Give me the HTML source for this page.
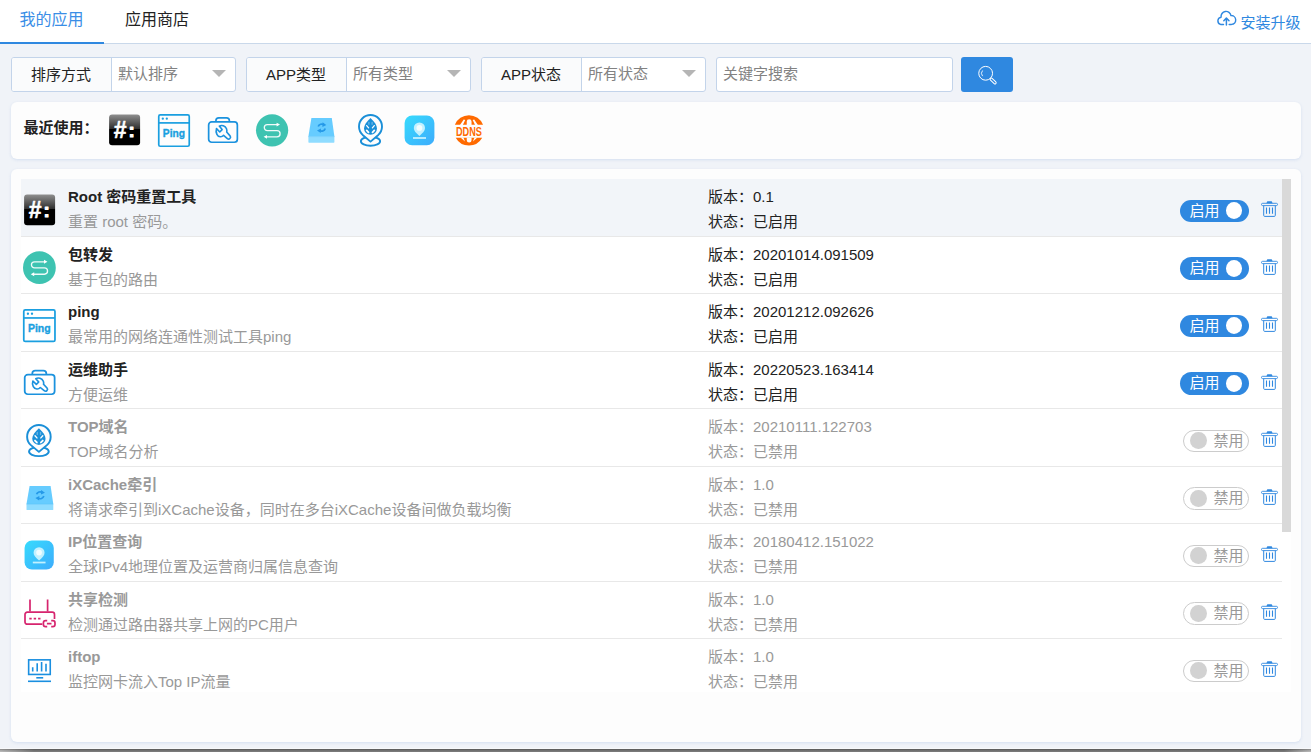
<!DOCTYPE html>
<html lang="zh-CN">
<head>
<meta charset="utf-8">
<title>我的应用</title>
<style>
*{box-sizing:border-box;margin:0;padding:0}
html,body{width:1311px;height:752px;overflow:hidden}
body{background:#f0f3f8;font-family:"Liberation Sans","Noto Sans CJK SC",sans-serif;font-size:15px;color:#222;position:relative}
svg{display:block;overflow:visible}
.tabs{position:absolute;left:0;top:0;width:1311px;height:44px;background:#fff;border-bottom:1px solid #c9d8ea}
.tab{position:absolute;top:0;height:44px;line-height:40px;font-size:16px;text-align:center;color:#222}
.tab.on{left:-1px;width:105px;color:#3a8ee6}
.tab.on:after{content:"";position:absolute;left:1px;bottom:0;width:104px;height:2.4px;background:#2f88e0}
.tab.t2{left:125px;width:64px}
.upg{position:absolute;right:10.6px;top:0;height:44px;line-height:45px;font-size:15px;color:#2f88e0}
.upg svg{position:absolute;left:-25px;top:11px}
.fg{position:absolute;top:57px;height:35px;border:1px solid #c3d4ea;border-radius:3px;background:#fff;overflow:hidden}
.fg .lb{position:absolute;left:0;top:0;width:100px;height:33px;line-height:34px;text-align:center;background:#fafbfc;border-right:1px solid #c3d4ea;font-size:15px;color:#222;text-indent:-1px}
.fg .sel{position:absolute;left:106px;top:0;height:33px;line-height:31px;font-size:15px;color:#828282}
.fg .arr{position:absolute;right:9px;top:12px;width:0;height:0;border-left:7.5px solid transparent;border-right:7.5px solid transparent;border-top:7.5px solid #b5b5b5}
.srch{position:absolute;left:716px;top:57px;width:237px;height:35px;border:1px solid #c3d4ea;border-radius:3px;background:#fff;line-height:31px;padding-left:6px;font-size:15px;color:#828282}
.sbtn{position:absolute;left:961px;top:57px;width:52px;height:35px;background:#2f88e0;border-radius:3px}
.recent{position:absolute;left:11px;top:102px;width:1290px;height:57px;background:#fdfdfd;border-radius:6px;box-shadow:0 1px 3px rgba(180,200,230,.45)}
.recent .t{position:absolute;left:12.4px;top:0;line-height:52.4px;font-size:15px;font-weight:bold;color:#222}
.ri{position:absolute;top:12px}
.card{position:absolute;left:11px;top:169px;width:1290px;height:573px;background:#fdfdfd;border-radius:6px;box-shadow:0 1px 3px rgba(180,200,230,.45)}
.list{position:absolute;left:10px;top:10px;width:1270px;height:513px;background:#fff;overflow:hidden}
.sb{position:absolute;right:0;top:0;width:9px;height:352.6px;background:#d9d9d9}
.row{position:relative;height:57.5px;width:1261px;border-bottom:1px solid #e8e8e8}
.row.hl{background:#f2f5f9}
.row .ic{position:absolute;left:3px;top:15.4px}
.row .nm{position:absolute;left:47px;top:7px;font-size:15px;font-weight:bold;line-height:22px;color:#222;white-space:nowrap}
.row .ds{position:absolute;left:47px;top:32px;font-size:15px;line-height:22px;color:#999;white-space:nowrap}
.row .v1{position:absolute;left:687px;top:7px;font-size:15px;line-height:22px;color:#222;white-space:nowrap}
.row .v2{position:absolute;left:687px;top:32px;font-size:15px;line-height:22px;color:#222;white-space:nowrap}
.row.off .nm,.row.off .v1,.row.off .v2{color:#999}
.tg{position:absolute;top:20.5px;height:22.5px;border-radius:12px;font-size:15px;line-height:21px}
.tg.on{left:1159px;width:69px;background:#2f88e0;color:#fff;padding-left:9.6px}
.tg.on i{position:absolute;right:6.6px;top:2.6px;width:16.6px;height:17.2px;border-radius:50%;background:#fff}
.tg.off{left:1162px;width:66px;background:#fff;border:1px solid #ccc;color:#999;padding-left:29.6px;line-height:19px}
.tg.off i{position:absolute;left:6.3px;top:1.6px;width:16.8px;height:17.2px;border-radius:50%;background:#d2d2d2}
.del{position:absolute;left:1240px;top:22px}
.btm{position:absolute;left:0;top:747.7px;width:1311px;height:4.3px;border-top:1px solid #f8f9fb;background:linear-gradient(rgba(0,0,0,.28),rgba(0,0,0,0) 70%),linear-gradient(to right,#b8b8b8 0,#7a7a7a 34px,#787878 1284px,#b8b8b8 100%)}
</style>
</head>
<body>
<div class="tabs">
  <div class="tab on">我的应用</div>
  <div class="tab t2">应用商店</div>
  <div class="upg"><svg width="20" height="15" viewBox="0 0 20 15"><g fill="none" stroke="#2f88e0" stroke-width="1.45" stroke-linecap="round" stroke-linejoin="round"><path d="M8.5 13.4H5.5A3.7 3.7 0 0 1 6.1 6.2A5 5 0 0 1 16 4.6A4.2 4.2 0 0 1 16.6 13.4H14.2"/><path d="M11.4 14.1V7.2M8.8 9.7L11.4 7.1L14 9.7" stroke-width="1.5"/></g></svg>安装升级</div>
</div>

<div class="fg" style="left:11px;width:225px"><div class="lb">排序方式</div><div class="sel">默认排序</div><div class="arr"></div></div>
<div class="fg" style="left:246px;width:225px"><div class="lb">APP类型</div><div class="sel">所有类型</div><div class="arr"></div></div>
<div class="fg" style="left:481px;width:225px"><div class="lb">APP状态</div><div class="sel">所有状态</div><div class="arr"></div></div>
<div class="srch">关键字搜索</div>
<div class="sbtn"><svg width="52" height="35" viewBox="0 0 52 35"><g fill="none" stroke="#fff" stroke-width="1"><circle cx="24.65" cy="16.3" r="6.9"/><path d="M21.6 13.5a4.2 4.2 0 0 0 0 5.6" stroke-opacity=".85"/><path d="M30.3 22.2L34 25.8" stroke-width="3.3" stroke-linecap="round"/><path d="M30.3 22.2L34 25.8" stroke="#2f88e0" stroke-width="1.3" stroke-linecap="round"/></g></svg></div>

<div class="recent">
  <div class="t">最近使用：</div>
  <svg class="ri" style="left:98px" width="32" height="33" viewBox="0 0 32 33"><linearGradient id="rg1" x1="0" y1="0" x2="0" y2="1"><stop offset="0" stop-color="#909090"/><stop offset=".46" stop-color="#303030"/><stop offset=".47" stop-color="#000"/><stop offset="1" stop-color="#000"/></linearGradient><rect x="0.1" y="0.4" width="31" height="30.8" rx="3" fill="url(#rg1)"/><text font-family="Liberation Sans,sans-serif" font-weight="bold" fill="#fff" stroke="#fff" stroke-linejoin="round"><tspan x="4.7" y="23.7" font-size="23" stroke-width=".5">#</tspan><tspan x="19.6" y="22.9" font-size="18.8" stroke-width="1.1">:</tspan></text></svg><svg class="ri" style="left:147px" width="32" height="33" viewBox="0 0 32 33"><g fill="none" stroke="#1a9fe0" stroke-width="1.7"><rect x="0.75" y="0.95" width="30.5" height="31.3" rx="1.5"/><path d="M0.75 8.9H31.25"/></g><circle cx="4.8" cy="4.7" r="1.15" fill="#1a9fe0"/><circle cx="8.8" cy="4.7" r="1.15" fill="#1a9fe0"/><text x="4.8" y="22.8" font-family="Liberation Sans,sans-serif" font-weight="bold" font-size="10.8" fill="#1a9fe0" stroke="#1a9fe0" stroke-width=".35" textLength="22.2" lengthAdjust="spacingAndGlyphs">Ping</text></svg><svg class="ri" style="left:196px" width="32" height="33" viewBox="0 0 32 33"><g fill="none" stroke="#1b92de" stroke-width="1.7" stroke-linejoin="round"><rect x="1.65" y="7.95" width="28.7" height="20.3" rx="3"/><path d="M8.95 7.8V6.6a2.8 2.8 0 0 1 2.8-2.8h7.8a2.8 2.8 0 0 1 2.8 2.8V7.8"/><path d="M12.3 11.2C14.6 9.8 18.3 10.7 19.5 13.8C19.9 14.9 20 16.1 19.7 17.1L23.05 20.97A1.9 1.9 0 0 1 20.35 23.63L16.6 20.4C15.6 21.6 14.4 22 13.3 21.9C11.8 21.8 10.5 20.8 9.9 19.5C9.3 18.3 8.8 16 9.5 13.7L12.8 17.1L15.1 14.7Z" stroke-width="1.6" transform="translate(0 0.9)"/></g></svg><svg class="ri" style="left:245px" width="33" height="33" viewBox="0 0 33 33"><circle cx="16.1" cy="16.35" r="16.1" fill="#3ec3b1"/><path d="M21.5 10.6H11.3a3 3 0 0 0 0 6H21a3.1 3.1 0 0 1 0 6.2H10" fill="none" stroke="#fff" stroke-opacity=".92" stroke-width="1.3"/><path d="M20.6 8.7L24 10.6 20.6 12.5ZM11 20.9L7.6 22.8 11 24.7Z" fill="#fff"/></svg><svg class="ri" style="left:294px" width="32" height="33" viewBox="0 0 32 33"><path d="M6.4 4H26.8L29.4 22.6H3.4Z" fill="#66ccff"/><path d="M3.4 22.6H29.4V28.1a.6 .6 0 0 1-.6 .6H4a.6 .6 0 0 1-.6-.6Z" fill="#8fdcff"/><path d="M3.4 22.6H29.4" stroke="#5cc4fa" stroke-width=".6"/><g fill="none" stroke="#2599e8" stroke-width="1.7"><path d="M13.2 12.6a3.7 3.7 0 0 1 5.6-1.9"/><path d="M20.2 14.4a3.7 3.7 0 0 1-5.6 2.1"/></g><path d="M17.6 8.3L21.3 10.9 17.4 12.9Z" fill="#2599e8"/><path d="M15.7 19L12 16.5 15.9 14.4Z" fill="#2599e8"/></svg><svg class="ri" style="left:343px" width="33" height="34" viewBox="0 0 33 34"><g fill="none" stroke="#1a8fd8" stroke-width="1.9"><ellipse cx="16.5" cy="27.3" rx="9.6" ry="4.5"/><path d="M16.5 27.6L8.67 20.92A11.5 11.5 0 1 1 24.33 20.92Z" fill="#fdfdfd" stroke-linejoin="round"/></g><path d="M16.5 4.1C20.3 7.6 23 11.2 23 14.6A6.5 6.1 0 0 1 10 14.6C10 11.2 12.7 7.6 16.5 4.1Z" fill="#1a8fd8"/><g fill="none" stroke="#fdfdfd" stroke-linecap="round"><path d="M12.7 11.6L14.6 13.8M20.3 11.6L18.4 13.8" stroke-width="1.3"/><path d="M12.7 16.4L14.5 18.3M20.3 16.4L18.5 18.3" stroke-width="1.8"/><path d="M14.9 8.3V10.3M18.1 8.3V10.3" stroke-width="1.3" stroke-opacity=".35"/></g></svg><svg class="ri" style="left:392px" width="32" height="33" viewBox="0 0 32 33"><linearGradient id="ip7" x1="0" y1="0" x2="1" y2="1"><stop offset="0" stop-color="#37dbfd"/><stop offset="1" stop-color="#3dacfc"/></linearGradient><rect x="1.6" y="1.6" width="29.8" height="29.6" rx="7.5" fill="url(#ip7)"/><path d="M16.4 21.9C13 19 10.8 16.8 10.8 14A5.6 5.6 0 0 1 22 14C22 16.8 19.8 19 16.4 21.9Z" fill="#c2f1ff"/><circle cx="16.4" cy="13.9" r="2.9" fill="#f1fdff"/><rect x="10" y="23.1" width="13" height="1.8" fill="#c2f1ff"/></svg><svg class="ri" style="left:441px" width="33" height="33" viewBox="0 0 33 33"><path d="M2.86 10.7A15.2 15.2 0 0 1 31.04 10.7ZM3.7 23.84A15.2 15.2 0 0 0 30.2 23.84Z" fill="#ff6a00"/><path d="M8 10.9L11.7 5.6L13.2 5.9L10.9 10.9ZM25.9 10.9L22.2 5.6L20.7 5.9L23 10.9ZM14.75 10.9V7.6a2.4 2.4 0 0 1 4.8 0V10.9Z" fill="#fdfdfd"/><path d="M8.5 23.6H11.4L13 27.4ZM25.4 23.6H22.5L20.9 27.4ZM14.75 23.6V26.2a2.4 2.4 0 0 0 4.8 0V23.6Z" fill="#fdfdfd"/><text x="4" y="21.7" font-family="Liberation Sans,sans-serif" font-weight="bold" font-size="11.9" fill="#ff6a00" textLength="26" lengthAdjust="spacingAndGlyphs">DDNS</text></svg>
</div>

<div class="card">
  <div class="list">
    <div class="row hl"><svg class="ic" style="left:3px;top:15.4px;transform:scale(1,1);transform-origin:0 0" width="32" height="33" viewBox="0 0 32 33"><linearGradient id="rg9" x1="0" y1="0" x2="0" y2="1"><stop offset="0" stop-color="#909090"/><stop offset=".46" stop-color="#303030"/><stop offset=".47" stop-color="#000"/><stop offset="1" stop-color="#000"/></linearGradient><rect x="0.1" y="0.4" width="31" height="30.8" rx="3" fill="url(#rg9)"/><text font-family="Liberation Sans,sans-serif" font-weight="bold" fill="#fff" stroke="#fff" stroke-linejoin="round"><tspan x="4.7" y="23.7" font-size="23" stroke-width=".5">#</tspan><tspan x="19.6" y="22.9" font-size="18.8" stroke-width="1.1">:</tspan></text></svg><div class="nm">Root 密码重置工具</div><div class="ds">重置 root 密码。</div><div class="v1">版本：0.1</div><div class="v2">状态：已启用</div><div class="tg on">启用<i></i></div><svg class="del" width="18" height="17" viewBox="0 0 18 17"><g fill="none" stroke="#2f88e0"><rect x="0.5" y="2.3" width="16" height="2.3" rx="1.1" stroke-width=".9"/><path d="M2.7 4.8V14.4a1 1 0 0 0 1 1H13.3a1 1 0 0 0 1-1V4.8" stroke-width="1"/><path d="M5.5 6.5V12.8M8.5 6.5V12.8M11.5 6.5V12.8" stroke-width="1.1"/></g><path d="M5.4 2.2L6.3 0.3H10.7L11.6 2.2Z" fill="#2f88e0"/></svg></div>
    <div class="row"><svg class="ic" style="left:2.1px;top:14.8px;transform:scale(1.0186,1.0186);transform-origin:0 0" width="33" height="33" viewBox="0 0 33 33"><circle cx="16.1" cy="16.35" r="16.1" fill="#3ec3b1"/><path d="M21.5 10.6H11.3a3 3 0 0 0 0 6H21a3.1 3.1 0 0 1 0 6.2H10" fill="none" stroke="#fff" stroke-opacity=".92" stroke-width="1.3"/><path d="M20.6 8.7L24 10.6 20.6 12.5ZM11 20.9L7.6 22.8 11 24.7Z" fill="#fff"/></svg><div class="nm">包转发</div><div class="ds">基于包的路由</div><div class="v1">版本：20201014.091509</div><div class="v2">状态：已启用</div><div class="tg on">启用<i></i></div><svg class="del" width="18" height="17" viewBox="0 0 18 17"><g fill="none" stroke="#2f88e0"><rect x="0.5" y="2.3" width="16" height="2.3" rx="1.1" stroke-width=".9"/><path d="M2.7 4.8V14.4a1 1 0 0 0 1 1H13.3a1 1 0 0 0 1-1V4.8" stroke-width="1"/><path d="M5.5 6.5V12.8M8.5 6.5V12.8M11.5 6.5V12.8" stroke-width="1.1"/></g><path d="M5.4 2.2L6.3 0.3H10.7L11.6 2.2Z" fill="#2f88e0"/></svg></div>
    <div class="row"><svg class="ic" style="left:2.2px;top:14.6px;transform:scale(1.023,1.006);transform-origin:0 0" width="32" height="33" viewBox="0 0 32 33"><g fill="none" stroke="#1a9fe0" stroke-width="1.7"><rect x="0.75" y="0.95" width="30.5" height="31.3" rx="1.5"/><path d="M0.75 8.9H31.25"/></g><circle cx="4.8" cy="4.7" r="1.15" fill="#1a9fe0"/><circle cx="8.8" cy="4.7" r="1.15" fill="#1a9fe0"/><text x="4.8" y="22.8" font-family="Liberation Sans,sans-serif" font-weight="bold" font-size="10.8" fill="#1a9fe0" stroke="#1a9fe0" stroke-width=".35" textLength="22.2" lengthAdjust="spacingAndGlyphs">Ping</text></svg><div class="nm">ping</div><div class="ds">最常用的网络连通性测试工具ping</div><div class="v1">版本：20201212.092626</div><div class="v2">状态：已启用</div><div class="tg on">启用<i></i></div><svg class="del" width="18" height="17" viewBox="0 0 18 17"><g fill="none" stroke="#2f88e0"><rect x="0.5" y="2.3" width="16" height="2.3" rx="1.1" stroke-width=".9"/><path d="M2.7 4.8V14.4a1 1 0 0 0 1 1H13.3a1 1 0 0 0 1-1V4.8" stroke-width="1"/><path d="M5.5 6.5V12.8M8.5 6.5V12.8M11.5 6.5V12.8" stroke-width="1.1"/></g><path d="M5.4 2.2L6.3 0.3H10.7L11.6 2.2Z" fill="#2f88e0"/></svg></div>
    <div class="row"><svg class="ic" style="left:1.9px;top:15.8px;transform:scale(1.042,0.964);transform-origin:0 0" width="32" height="33" viewBox="0 0 32 33"><g fill="none" stroke="#1b92de" stroke-width="1.7" stroke-linejoin="round"><rect x="1.65" y="7.95" width="28.7" height="20.3" rx="3"/><path d="M8.95 7.8V6.6a2.8 2.8 0 0 1 2.8-2.8h7.8a2.8 2.8 0 0 1 2.8 2.8V7.8"/><path d="M12.3 11.2C14.6 9.8 18.3 10.7 19.5 13.8C19.9 14.9 20 16.1 19.7 17.1L23.05 20.97A1.9 1.9 0 0 1 20.35 23.63L16.6 20.4C15.6 21.6 14.4 22 13.3 21.9C11.8 21.8 10.5 20.8 9.9 19.5C9.3 18.3 8.8 16 9.5 13.7L12.8 17.1L15.1 14.7Z" stroke-width="1.6" transform="translate(0 0.9)"/></g></svg><div class="nm">运维助手</div><div class="ds">方便运维</div><div class="v1">版本：20220523.163414</div><div class="v2">状态：已启用</div><div class="tg on">启用<i></i></div><svg class="del" width="18" height="17" viewBox="0 0 18 17"><g fill="none" stroke="#2f88e0"><rect x="0.5" y="2.3" width="16" height="2.3" rx="1.1" stroke-width=".9"/><path d="M2.7 4.8V14.4a1 1 0 0 0 1 1H13.3a1 1 0 0 0 1-1V4.8" stroke-width="1"/><path d="M5.5 6.5V12.8M8.5 6.5V12.8M11.5 6.5V12.8" stroke-width="1.1"/></g><path d="M5.4 2.2L6.3 0.3H10.7L11.6 2.2Z" fill="#2f88e0"/></svg></div>
    <div class="row off"><svg class="ic" style="left:1.25px;top:14.8px;transform:scale(1.024,1.01);transform-origin:0 0" width="33" height="34" viewBox="0 0 33 34"><g fill="none" stroke="#1a8fd8" stroke-width="1.9"><ellipse cx="16.5" cy="27.3" rx="9.6" ry="4.5"/><path d="M16.5 27.6L8.67 20.92A11.5 11.5 0 1 1 24.33 20.92Z" fill="#fdfdfd" stroke-linejoin="round"/></g><path d="M16.5 4.1C20.3 7.6 23 11.2 23 14.6A6.5 6.1 0 0 1 10 14.6C10 11.2 12.7 7.6 16.5 4.1Z" fill="#1a8fd8"/><g fill="none" stroke="#fdfdfd" stroke-linecap="round"><path d="M12.7 11.6L14.6 13.8M20.3 11.6L18.4 13.8" stroke-width="1.3"/><path d="M12.7 16.4L14.5 18.3M20.3 16.4L18.5 18.3" stroke-width="1.8"/><path d="M14.9 8.3V10.3M18.1 8.3V10.3" stroke-width="1.3" stroke-opacity=".35"/></g></svg><div class="nm">TOP域名</div><div class="ds">TOP域名分析</div><div class="v1">版本：20210111.122703</div><div class="v2">状态：已禁用</div><div class="tg off">禁用<i></i></div><svg class="del" width="18" height="17" viewBox="0 0 18 17"><g fill="none" stroke="#2f88e0"><rect x="0.5" y="2.3" width="16" height="2.3" rx="1.1" stroke-width=".9"/><path d="M2.7 4.8V14.4a1 1 0 0 0 1 1H13.3a1 1 0 0 0 1-1V4.8" stroke-width="1"/><path d="M5.5 6.5V12.8M8.5 6.5V12.8M11.5 6.5V12.8" stroke-width="1.1"/></g><path d="M5.4 2.2L6.3 0.3H10.7L11.6 2.2Z" fill="#2f88e0"/></svg></div>
    <div class="row off"><svg class="ic" style="left:1.5px;top:15.3px;transform:scale(1.03,0.976);transform-origin:0 0" width="32" height="33" viewBox="0 0 32 33"><path d="M6.4 4H26.8L29.4 22.6H3.4Z" fill="#66ccff"/><path d="M3.4 22.6H29.4V28.1a.6 .6 0 0 1-.6 .6H4a.6 .6 0 0 1-.6-.6Z" fill="#8fdcff"/><path d="M3.4 22.6H29.4" stroke="#5cc4fa" stroke-width=".6"/><g fill="none" stroke="#2599e8" stroke-width="1.7"><path d="M13.2 12.6a3.7 3.7 0 0 1 5.6-1.9"/><path d="M20.2 14.4a3.7 3.7 0 0 1-5.6 2.1"/></g><path d="M17.6 8.3L21.3 10.9 17.4 12.9Z" fill="#2599e8"/><path d="M15.7 19L12 16.5 15.9 14.4Z" fill="#2599e8"/></svg><div class="nm">iXCache牵引</div><div class="ds">将请求牵引到iXCache设备，同时在多台iXCache设备间做负载均衡</div><div class="v1">版本：1.0</div><div class="v2">状态：已禁用</div><div class="tg off">禁用<i></i></div><svg class="del" width="18" height="17" viewBox="0 0 18 17"><g fill="none" stroke="#2f88e0"><rect x="0.5" y="2.3" width="16" height="2.3" rx="1.1" stroke-width=".9"/><path d="M2.7 4.8V14.4a1 1 0 0 0 1 1H13.3a1 1 0 0 0 1-1V4.8" stroke-width="1"/><path d="M5.5 6.5V12.8M8.5 6.5V12.8M11.5 6.5V12.8" stroke-width="1.1"/></g><path d="M5.4 2.2L6.3 0.3H10.7L11.6 2.2Z" fill="#2f88e0"/></svg></div>
    <div class="row off"><svg class="ic" style="left:2.4px;top:15.1px;transform:scale(0.98,0.98);transform-origin:0 0" width="32" height="33" viewBox="0 0 32 33"><linearGradient id="ip15" x1="0" y1="0" x2="1" y2="1"><stop offset="0" stop-color="#37dbfd"/><stop offset="1" stop-color="#3dacfc"/></linearGradient><rect x="1.6" y="1.6" width="29.8" height="29.6" rx="7.5" fill="url(#ip15)"/><path d="M16.4 21.9C13 19 10.8 16.8 10.8 14A5.6 5.6 0 0 1 22 14C22 16.8 19.8 19 16.4 21.9Z" fill="#c2f1ff"/><circle cx="16.4" cy="13.9" r="2.9" fill="#f1fdff"/><rect x="10" y="23.1" width="13" height="1.8" fill="#c2f1ff"/></svg><div class="nm">IP位置查询</div><div class="ds">全球IPv4地理位置及运营商归属信息查询</div><div class="v1">版本：20180412.151022</div><div class="v2">状态：已禁用</div><div class="tg off">禁用<i></i></div><svg class="del" width="18" height="17" viewBox="0 0 18 17"><g fill="none" stroke="#2f88e0"><rect x="0.5" y="2.3" width="16" height="2.3" rx="1.1" stroke-width=".9"/><path d="M2.7 4.8V14.4a1 1 0 0 0 1 1H13.3a1 1 0 0 0 1-1V4.8" stroke-width="1"/><path d="M5.5 6.5V12.8M8.5 6.5V12.8M11.5 6.5V12.8" stroke-width="1.1"/></g><path d="M5.4 2.2L6.3 0.3H10.7L11.6 2.2Z" fill="#2f88e0"/></svg></div>
    <div class="row off"><svg class="ic" style="left:3.2px;top:12.6px;transform:scale(1,1);transform-origin:0 0" width="34" height="33" viewBox="0 0 34 33"><g fill="none" stroke="#d6246e" stroke-width="1.7"><path d="M6 5.6V17.5M23.6 5.6V17.5"/><path d="M18.3 30.2H3.3a2.3 2.3 0 0 1-2.3-2.3V20.5a2.3 2.3 0 0 1 2.3-2.3H28.2a2.3 2.3 0 0 1 2.3 2.3V25"/><path d="M5.3 24.6H7.7M9.7 24.6H12.1M14.1 24.6H16.5"/><path d="M23.2 32.7H21.6a2.2 2.2 0 0 1-2.2-2.2V28.9a2.2 2.2 0 0 1 2.2-2.2H23.2M27.2 26.7H28.8a2.2 2.2 0 0 1 2.2 2.2V30.5a2.2 2.2 0 0 1-2.2 2.2H27.2M22.9 29.7H27.5"/></g></svg><div class="nm">共享检测</div><div class="ds">检测通过路由器共享上网的PC用户</div><div class="v1">版本：1.0</div><div class="v2">状态：已禁用</div><div class="tg off">禁用<i></i></div><svg class="del" width="18" height="17" viewBox="0 0 18 17"><g fill="none" stroke="#2f88e0"><rect x="0.5" y="2.3" width="16" height="2.3" rx="1.1" stroke-width=".9"/><path d="M2.7 4.8V14.4a1 1 0 0 0 1 1H13.3a1 1 0 0 0 1-1V4.8" stroke-width="1"/><path d="M5.5 6.5V12.8M8.5 6.5V12.8M11.5 6.5V12.8" stroke-width="1.1"/></g><path d="M5.4 2.2L6.3 0.3H10.7L11.6 2.2Z" fill="#2f88e0"/></svg></div>
    <div class="row off"><svg class="ic" style="left:2.8px;top:14.2px;transform:scale(1,1);transform-origin:0 0" width="32" height="33" viewBox="0 0 32 33"><g fill="none" stroke="#1a8fe0" stroke-width="1.6"><rect x="4.65" y="6.85" width="21.6" height="14.6"/><path d="M8.7 18.4V14.2M13.2 18.4V10.2M17.6 18.4V9.1M22 18.4V10.8"/><path d="M12.3 24.8H19.2"/><path d="M4 28.3H27"/></g></svg><div class="nm">iftop</div><div class="ds">监控网卡流入Top IP流量</div><div class="v1">版本：1.0</div><div class="v2">状态：已禁用</div><div class="tg off">禁用<i></i></div><svg class="del" width="18" height="17" viewBox="0 0 18 17"><g fill="none" stroke="#2f88e0"><rect x="0.5" y="2.3" width="16" height="2.3" rx="1.1" stroke-width=".9"/><path d="M2.7 4.8V14.4a1 1 0 0 0 1 1H13.3a1 1 0 0 0 1-1V4.8" stroke-width="1"/><path d="M5.5 6.5V12.8M8.5 6.5V12.8M11.5 6.5V12.8" stroke-width="1.1"/></g><path d="M5.4 2.2L6.3 0.3H10.7L11.6 2.2Z" fill="#2f88e0"/></svg></div>
    <div class="sb"></div>
  </div>
</div>
<div class="btm"></div>
</body>
</html>
